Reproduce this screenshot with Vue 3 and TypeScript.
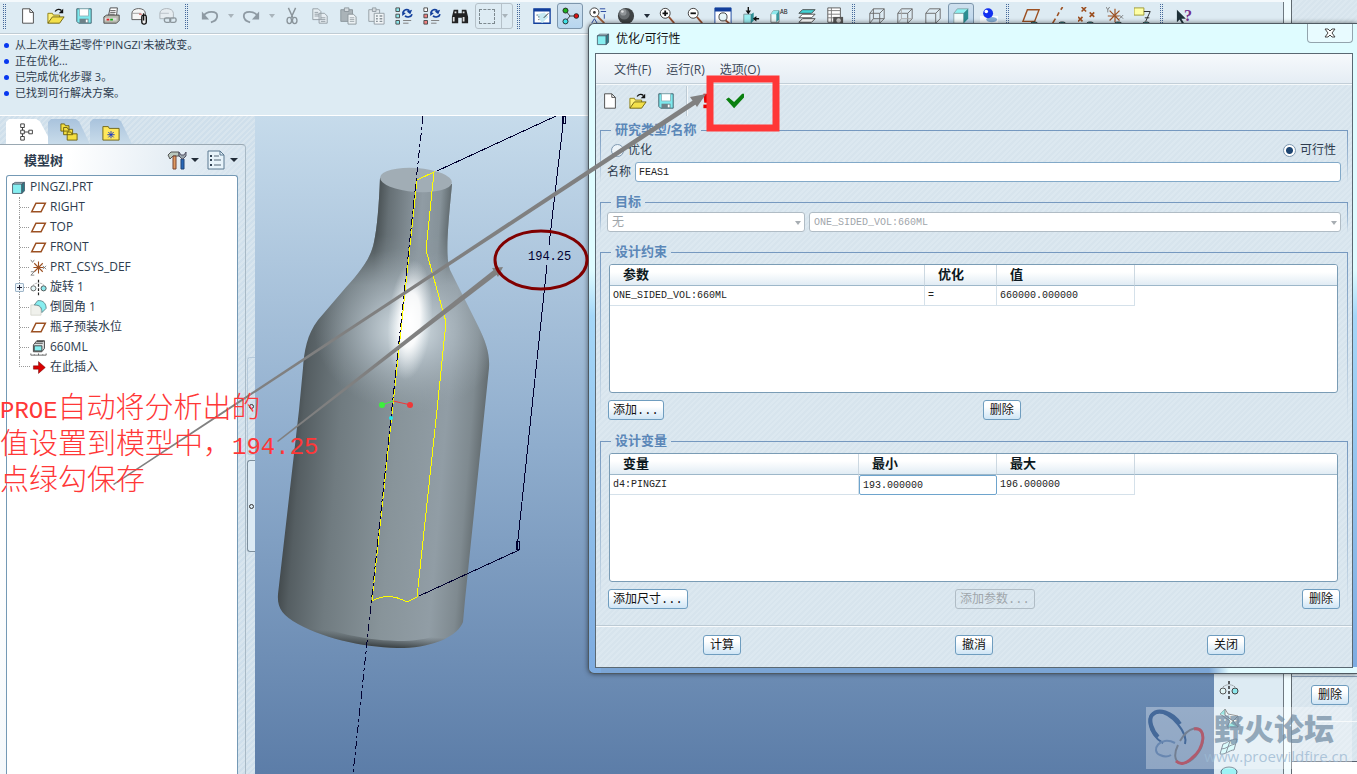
<script setup lang="ts">
import { ref } from 'vue'

interface Tool {
  kind: 'icon' | 'grip' | 'caret' | 'select'
  icon?: string
  label?: string
  active?: boolean
}
interface TreeItem {
  icon: string
  text: string
  expandable?: boolean
}

const eye = '<path d="M9 20a4 3 0 0 1 9 0z" fill="#1b8f92" stroke="#333"/>'
const cubeWire = '<path d="M2 7h11v11H2zM6 2h12v11M2 7l4-5M13 7l5-5M13 18l5-5" fill="none" stroke="#666"/>'

const icons: Record<string, string> = {
  new: '<path d="M4 2h8l4 4v12H4z" fill="#fff" stroke="#444"/><path d="M12 2v4h4" fill="none" stroke="#444"/>',
  open: '<path d="M1 18V7h5l1 2h7v3" fill="#fff27a" stroke="#8a7a10"/><path d="M1 18l5-7h13l-5 7z" fill="#f3e04a" stroke="#6b6010"/><path d="M9 5c2-3 5-3 7-1" fill="none" stroke="#111" stroke-width="1.5"/><path d="M18 2v5h-5z" fill="#111"/>',
  save: '<path d="M2 2h16v16H4l-2-2z" fill="#7de9ee" stroke="#3a5a66"/><path d="M5 2h10v8H5z" fill="#fff" stroke="#8fb6bc"/><path d="M5 13h10v5H5z" fill="#6d8188"/><path d="M12 14h2v3h-2z" fill="#fff"/>',
  print: '<path d="M6 10L8 1h8l-1 9z" fill="#fff" stroke="#444"/><path d="M8 4h6M8 6h6M7 8h6" stroke="#555"/><path d="M1 11l3-2h14v6l-3 3H1z" fill="#b9b9ae" stroke="#444"/><path d="M2 12h13v3H2z" fill="#ddd"/><path d="M4 13h3v2H4z" fill="#d22"/><path d="M8 13h3v2H8z" fill="#1a1"/>',
  mail: '<path d="M1 7c0-7 15-7 15 0v7H1z" fill="#f6f6f6" stroke="#555"/><path d="M1 7h10" stroke="#999"/><path d="M9 8h3" stroke="#c33"/><rect x="12" y="9" width="5" height="10" rx="2" fill="#eee" stroke="#111" stroke-width="1.5"/><path d="M14 7v8" stroke="#111" stroke-width="1.5"/>',
  link: '<path d="M1 7c0-7 15-7 15 0v6H1z" fill="#e6ecf0" stroke="#a8b0b6"/><path d="M1 7h10" stroke="#b8c0c6"/><rect x="6" y="12" width="7" height="5" rx="2" fill="none" stroke="#8b959b" stroke-width="1.5"/><rect x="12" y="12" width="7" height="5" rx="2" fill="none" stroke="#8b959b" stroke-width="1.5"/>',
  undo: '<path d="M3 10c3-6 15-6 15 0 0 4-3 6-7 7" fill="none" stroke="#8e9aa3" stroke-width="2"/><path d="M1 5v9h8z" fill="#8e9aa3"/>',
  redo: '<path d="M17 10c-3-6-15-6-15 0 0 4 3 6 7 7" fill="none" stroke="#8e9aa3" stroke-width="2"/><path d="M19 5v9h-8z" fill="#8e9aa3"/>',
  cut: '<path d="M6 1l5 11M14 1L9 12" stroke="#8a949a" stroke-width="1.6"/><ellipse cx="7" cy="15" rx="2.5" ry="3.5" fill="none" stroke="#8a949a" stroke-width="1.5"/><ellipse cx="13" cy="15" rx="2.5" ry="3.5" fill="none" stroke="#8a949a" stroke-width="1.5"/>',
  copy: '<path d="M2 2h6l3 3v9H2zM9 7h6l3 3v8H9z" fill="#e6edf2" stroke="#929ca3"/><path d="M4 6h4M4 8h5M4 10h5M11 12h5M11 14h5M11 16h5" stroke="#929ca3"/>',
  paste: '<path d="M2 3h13v13H2z" fill="#aab3b8" stroke="#8a949a"/><path d="M6 1h5v4H6z" fill="#d5dbdf" stroke="#8a949a"/><path d="M10 8h6l3 3v8h-9z" fill="#edf2f5" stroke="#8a949a"/><path d="M12 12h5M12 14h5M12 16h5" stroke="#9aa4aa"/>',
  pastes: '<path d="M2 3h12v13H2z" fill="#e3eaef" stroke="#929ca3"/><path d="M6 1h4v4H6z" fill="#d5dbdf" stroke="#929ca3"/><path d="M8 7h11v12H8z" fill="#f1f5f7" stroke="#929ca3"/><path d="M10 10h2M10 13h2M10 16h2M14 10h3M14 13h3M14 16h3" stroke="#8a949a" stroke-width="1.5"/>',
  regenA: '<path d="M1 1h4v4H1zM1 8h4v4H1zM1 15h4v4H1z" fill="#8de8ec" stroke="#444"/><path d="M9 6c1-3 4-4 7-2M19 8c-1 3-5 4-8 2" fill="none" stroke="#123f9c" stroke-width="1.8"/><path d="M19 3l-2 5-4-3zM8 5l4 2-4 3z" fill="#123f9c"/><path d="M9 15h9M9 18h6" stroke="#777"/>',
  regenB: '<path d="M1 1h4v4H1z" fill="#fff" stroke="#444"/><path d="M1 8h4v4H1zM1 15h4v4H1z" fill="#f08080" stroke="#444"/><path d="M9 6c1-3 4-4 7-2M19 8c-1 3-5 4-8 2" fill="none" stroke="#123f9c" stroke-width="1.8"/><path d="M19 3l-2 5-4-3zM8 5l4 2-4 3z" fill="#123f9c"/><path d="M9 15h9M9 18h6" stroke="#777"/>',
  find: '<path d="M3 3h5v4h4V3h5l2 8v7h-7v-6H8v6H1v-7z" fill="#222"/><path d="M3 11v5M14 11v5M5 5v2M14 5v2" stroke="#ddd" stroke-width="2"/>',
  repaint: '<path d="M1 2h18v16H1z" fill="#fff" stroke="#123f9c" stroke-width="1.5"/><path d="M1 2h18v3H1z" fill="#123f9c"/><path d="M4 8l9-2 4 5-7 7z" fill="#c6e9f2"/><path d="M12 12l5-5" stroke="#222"/><path d="M4 9h1M6 11h1M6 14h1" stroke="#222"/>',
  spin: '<path d="M5 4l5 6h7M10 10l-5 6" fill="none" stroke="#333"/><circle cx="5" cy="4" r="2.8" fill="#1db31d" stroke="#222"/><circle cx="17" cy="10" r="2.6" fill="#e01010" stroke="#222"/><circle cx="5" cy="16" r="2.8" fill="#3fe0e6" stroke="#222"/>',
  orient: '<circle cx="6" cy="6" r="5" fill="#fff" stroke="#333"/><circle cx="6" cy="6" r="1.5" fill="#333"/><path d="M9 10l8 8" stroke="#a0603a" stroke-width="2"/><path d="M12 2h6M13 5h6M17 8v5M3 18l3-5 3 5" stroke="#1d3f9c" fill="none"/>',
  sphere: '<circle cx="10" cy="10" r="9" fill="#3e4244"/><circle cx="8" cy="8" r="6" fill="#686d70"/><circle cx="7" cy="6" r="3.5" fill="#909598"/><circle cx="6" cy="5" r="1.5" fill="#dde0e1"/>',
  zoomin: '<circle cx="8" cy="7" r="5.5" fill="#fff" stroke="#333"/><path d="M5 7h6M8 4v6" stroke="#111" stroke-width="2"/><path d="M12 11l6 7" stroke="#944f30" stroke-width="2"/>',
  zoomout: '<circle cx="8" cy="7" r="5.5" fill="#fff" stroke="#333"/><path d="M5 7h6" stroke="#111" stroke-width="2"/><path d="M12 11l6 7" stroke="#944f30" stroke-width="2"/>',
  zoomfit: '<path d="M1 1h18v18H1z" fill="#fff" stroke="#123f9c"/><path d="M1 1h18v4H1z" fill="#123f9c"/><circle cx="10" cy="11" r="4.5" fill="#e8f8fa" stroke="#333"/><path d="M13 15l5 4" stroke="#944f30" stroke-width="2"/>',
  recent: '<path d="M2 8h8v10H2z" fill="#9aeef1" stroke="#7b9296"/><path d="M10 8l3-2v9l-3 3z" fill="#2d8e94"/><path d="M7 0v7M19 13h-5" stroke="#111" stroke-width="1.5"/><path d="M4 4h6l-3 4zM16 10v6l-4-3z" fill="#111"/>',
  views: '<path d="M1 8l3-4h6v13H1z" fill="#eefafa" stroke="#777"/><path d="M1 8l3-4h6l-3 4z" fill="#8de8ec"/><path d="M7 8l3-4v10l-3 3z" fill="#3a9aa0"/><text x="11" y="8" font-size="7" font-family="Liberation Mono" fill="#222">AB</text>',
  layers: '<path d="M1 17l4-4h14l-4 4zM1 12l4-4h14l-4 4z" fill="#fff" stroke="#444"/><path d="M1 7l4-4h14l-4 4z" fill="#43d4d6" stroke="#444"/>',
  snapshot: '<path d="M2 1h14v16H2z" fill="#fff" stroke="#555"/><path d="M2 4h14M2 8h14M2 12h14M6 1v16" stroke="#777"/><path d="M8 11h11v8H8z" fill="#555"/><circle cx="14" cy="15" r="2.5" fill="#ccc"/>',
  wire: cubeWire + '<path d="M6 2v11h12M2 18l4-5" fill="none" stroke="#666"/>',
  hidden: cubeWire + '<path d="M6 2v11h12M2 18l4-5" fill="none" stroke="#aaa"/>',
  nohidden: cubeWire,
  shaded: '<path d="M2 7h11v11H2z" fill="#f2fbfb" stroke="#8ba5a8"/><path d="M2 7l4-5h12l-5 5z" fill="#8cf1f1" stroke="#8ba5a8"/><path d="M13 7l5-5v11l-5 5z" fill="#2b8e92"/>',
  realistic: '<path d="M0 10h20v9H0z" fill="#f6fafc"/><ellipse cx="13" cy="14" rx="6" ry="3" fill="#86aed6"/><circle cx="9" cy="7" r="5.5" fill="#1230f0"/><circle cx="7" cy="5" r="2" fill="#fff"/>',
  planes: '<path d="M1 16L6 3h13l-5 13z" fill="none" stroke="#9c5022" stroke-width="1.6"/>' + eye,
  axes: '<path d="M3 18l3-5M8 10l2-4M12 3l2-3" stroke="#9c5022" stroke-width="1.8"/>' + eye,
  points: '<path d="M4 0l5 5M9 0L4 5M13 6l5 5M18 6l-5 5M0 11l5 5M5 11l-5 5" stroke="#9c5022" stroke-width="1.8"/>' + eye,
  csys: '<path d="M2 10h13M10 2v15M4 4l11 11M15 4L4 15" stroke="#9c5022" stroke-width="1.3"/><path d="M0 0l2 3 2-3M2 3v3M15 9l4 4M19 9l-4 4" fill="none" stroke="#777"/>' + eye,
  notes: '<path d="M0 1h11v8H0z" fill="#ffffa6" stroke="#99942e"/><path d="M11 5h7l-5 11" fill="none" stroke="#222"/><path d="M12 12h5" stroke="#222"/>' + eye,
  help: '<path d="M1 3v14l3-3 3 5 2-1-3-5h5z" fill="#1e3038"/><text x="9" y="15" font-size="18" font-weight="bold" font-family="Liberation Serif" fill="#75308c">?</text>',
  part: '<path d="M3 6l3-2h11l-3 2z" fill="#eefafa" stroke="#456"/><path d="M3 6h11v11H3z" fill="#86eef0" stroke="#456"/><path d="M14 6l3-2v10l-3 3z" fill="#2b7e88" stroke="#456"/>',
  plane: '<path d="M2 15L7 5h11l-5 10z" fill="none" stroke="#9c5022" stroke-width="1.8"/>',
  csysTree: '<path d="M4 10h12M10 3v14M5 5l10 10M15 5L5 15" stroke="#9c5022" stroke-width="1.3"/><path d="M1 1l2 3 2-3M15 8l4 4M19 8l-4 4M1 15h4l-4 4h4" fill="none" stroke="#777"/>',
  revolve: '<path d="M10 1v3M10 6v3M10 11v3M10 16v3" stroke="#222" stroke-width="1.4"/><circle cx="4" cy="11" r="3" fill="#e2f6f7" stroke="#555"/><circle cx="16" cy="11" r="3" fill="#8de8ec" stroke="#444"/><path d="M4 7c3-3 9-3 12 0" stroke="#777" fill="none" stroke-dasharray="1 1"/>',
  round: '<path d="M1 7h6c5 0 6 4 6 12H1z" fill="#f0f1ec" stroke="#d5d5cc"/><path d="M5 7l4-5c7-1 10 4 10 9l-5 5c0-6-2-9-9-9z" fill="#86eef0" stroke="#5b8084"/>',
  measure: '<path d="M4 7l4-5h9v9l-3 4H4z" fill="#dfe3e4" stroke="#333"/><path d="M5 8h9v6H5z" fill="#86eef0" stroke="#333"/><path d="M6 5h9M8 3h8" stroke="#333"/><path d="M1 19h18M1 17v2M5 18v1M10 17v2M15 18v1M19 17v2" stroke="#555"/>',
  insert: '<path d="M4 8h6V3l8 7-8 7v-5H4z" fill="#d80000" stroke="#500" stroke-width=".5"/>',
  hierarchy: '<path d="M3 1h4v4H3zM3 8h4v4H3zM3 15h4v4H3zM12 8h4v4h-4z" fill="#fff" stroke="#333"/><path d="M5 5v3M5 12v3M7 10h5" stroke="#333"/>',
  folders: '<path d="M1 1h4l1 2h4v6H1zM4 5h4l1 2h5v6H4zM8 10h4l1 2h6v7H8z" fill="#f4df41" stroke="#6b6010"/>',
  favorites: '<path d="M1 4h6l1 2h11v13H1z" fill="#ffe85c" stroke="#6b6010"/><path d="M10 9v8M6 13h8M7 10l6 6M13 10l-6 6" stroke="#1432c8"/>',
  hammer: '<path d="M1 5l3-3h8v4H6L3 9z" fill="#b9c7bd" stroke="#555"/><path d="M6 6h3v13H6z" fill="#e09a62" stroke="#743"/><path d="M14 9h3v10h-3z" fill="#2868b8" stroke="#247"/><path d="M12 2l2 3h3l2-3v4l-3 3h-1l-3-3z" fill="#9aa4aa" stroke="#556"/>',
  settings: '<path d="M2 1h12l4 4v14H2z" fill="#e7f3fa" stroke="#5a7890"/><path d="M14 1v4h4" fill="none" stroke="#5a7890"/><path d="M4 5h2v2H4zM4 9h2v2H4zM4 14h2v2H4z" fill="#345"/><path d="M8 6h5M8 10h7M8 15h7" stroke="#567"/>',
  run: '<path d="M6 2h6l-1 10H7z" fill="#e80000"/><path d="M6 14h6v4H6z" fill="#e80000"/>',
  check: '<path d="M0 8l3-2 6 5L18 2h2v4L9 18z" fill="#0a8010"/>',
  boundary: '<path d="M1 6l5-5 3 5 10 2v11H8l3-6z" fill="#eefafa" stroke="#666"/><path d="M1 6l5-5v6zM8 19l6-6 5 6z" fill="#6fdcd8"/><path d="M6 1v6l8 6 5-5M14 13l5 6" fill="none" stroke="#555"/>',
  surface: '<path d="M1 18L4 8c5-1 7-5 14-5l-3 11c-5 0-8 5-14 4z" fill="#c9fafb" stroke="#567"/><path d="M2 13c6 0 8-4 14-5M11 5L7 17" fill="none" stroke="#567"/>',
  fill: '<ellipse cx="10" cy="8" rx="8" ry="5" fill="#9df3f5" stroke="#567"/>',
}

const t = (icon: string, label: string, active = false): Tool => ({ kind: 'icon', icon, label, active })
const grip: Tool = { kind: 'grip' }
const caret: Tool = { kind: 'caret' }

const mainTools: Tool[] = [
  grip, t('new', '新建'), t('open', '打开'), t('save', '保存'), t('print', '打印'), t('mail', '发送'), t('link', '发送链接'),
  grip, t('undo', '撤消'), caret, t('redo', '重做'), caret, t('cut', '剪切'), t('copy', '复制'), t('paste', '粘贴'),
  t('pastes', '选择性粘贴'), t('regenA', '再生'), t('regenB', '再生管理器'), t('find', '查找'), { kind: 'select' },
  grip, t('repaint', '重画'), t('spin', '旋转中心', true), t('orient', '定向模式'), t('sphere', '外观库'), caret, t('zoomin', '放大'),
  t('zoomout', '缩小'), t('zoomfit', '重新调整'), t('recent', '重定向'), t('views', '已命名视图'), t('layers', '层'), t('snapshot', '视图管理器'),
  grip, t('wire', '线框'), t('hidden', '隐藏线'), t('nohidden', '无隐藏线'), t('shaded', '着色', true), t('realistic', '增强真实感'),
  grip, t('planes', '基准平面'), t('axes', '基准轴'), t('points', '基准点'), t('csys', '坐标系'), t('notes', '注释'),
  grip, t('help', '帮助'),
]

const messages = ["从上次再生起零件'PINGZI'未被改变。", '正在优化...', '已完成优化步骤 3。', '已找到可行解决方案。']

const tree: TreeItem[] = [
  { icon: 'plane', text: 'RIGHT' },
  { icon: 'plane', text: 'TOP' },
  { icon: 'plane', text: 'FRONT' },
  { icon: 'csysTree', text: 'PRT_CSYS_DEF' },
  { icon: 'revolve', text: '旋转 1', expandable: true },
  { icon: 'round', text: '倒圆角 1' },
  { icon: 'plane', text: '瓶子预装水位' },
  { icon: 'measure', text: '660ML' },
  { icon: 'insert', text: '在此插入' },
]

const sideTools = [
  { icon: 'revolve', label: '镜像' },
  { icon: 'boundary', label: '边界混合' },
  { icon: 'surface', label: '造型' },
  { icon: 'fill', label: '填充' },
]
const menus = ['文件(F)', '运行(R)', '选项(O)']

const study = ref('feasibility')
const studyName = ref('FEAS1')
const minimum = ref('193.000000')
</script>

<template>
  <div class="desktop">
    <main class="app">
      <header class="toolbar">
        <template v-for="(tool, i) in mainTools" :key="i">
          <span v-if="tool.kind === 'grip'" class="grip"></span>
          <span v-else-if="tool.kind === 'caret'" class="caret-cell"><i class="caret" :class="{ dim: i < 20 }"></i></span>
          <button v-else-if="tool.kind === 'select'" class="select-tool" type="button" aria-label="选取框">
            <i class="marquee"></i><i class="caret dim"></i>
          </button>
          <button v-else class="tool" :class="{ active: tool.active }" type="button" :aria-label="tool.label">
            <svg viewBox="0 0 20 20" v-html="icons[tool.icon ?? '']"></svg>
          </button>
        </template>
      </header>

      <ul class="messages">
        <li v-for="m in messages" :key="m">{{ m }}</li>
      </ul>

      <div class="work">
        <aside class="navigator">
          <div class="nav-main">
            <nav class="tabs">
              <button v-for="(name, i) in ['hierarchy', 'folders', 'favorites']" :key="name" class="tab" :class="{ on: i === 0 }" type="button" :aria-label="name">
                <svg viewBox="0 0 20 20" v-html="icons[name]"></svg>
              </button>
            </nav>
            <section class="panel">
              <div class="panel-head">
                <h2>模型树</h2>
                <button class="head-tool" type="button" aria-label="设置"><svg viewBox="0 0 20 20" v-html="icons.hammer"></svg><i class="caret"></i></button>
                <button class="head-tool" type="button" aria-label="显示"><svg viewBox="0 0 20 20" v-html="icons.settings"></svg><i class="caret"></i></button>
              </div>
              <div class="tree">
                <div class="root"><svg viewBox="0 0 20 20" v-html="icons.part"></svg>PINGZI.PRT</div>
                <ul>
                  <li v-for="item in tree" :key="item.text">
                    <span class="branch"><button v-if="item.expandable" type="button" aria-label="展开"></button></span>
                    <svg viewBox="0 0 20 20" v-html="icons[item.icon]"></svg>{{ item.text }}
                  </li>
                </ul>
              </div>
            </section>
          </div>
          <div class="sash"><span class="handle"></span><span class="handle"></span></div>
        </aside>

        <section class="viewport">
          <svg class="model" width="345" height="658" viewBox="255 116 345 658">
            <defs>
              <linearGradient id="body" gradientUnits="userSpaceOnUse" x1="290" y1="440" x2="482" y2="456">
                <stop offset="0" stop-color="#42494c" /><stop offset=".06" stop-color="#555e62" /><stop offset=".25" stop-color="#707b80" />
                <stop offset=".55" stop-color="#88949a" /><stop offset=".8" stop-color="#919da5" /><stop offset=".93" stop-color="#7f8a90" /><stop offset="1" stop-color="#636c70" />
              </linearGradient>
              <linearGradient id="neck" gradientUnits="userSpaceOnUse" x1="377" y1="220" x2="450" y2="225">
                <stop offset="0" stop-color="#4b5356" /><stop offset=".15" stop-color="#667075" /><stop offset=".6" stop-color="#909ca4" /><stop offset=".85" stop-color="#869299" /><stop offset="1" stop-color="#5e686c" />
              </linearGradient>
              <linearGradient id="neckFade" gradientUnits="userSpaceOnUse" x1="0" y1="235" x2="0" y2="285">
                <stop offset="0" stop-color="#fff" /><stop offset="1" stop-color="#000" />
              </linearGradient>
              <mask id="neckMask"><rect x="255" y="116" width="345" height="658" fill="url(#neckFade)" /></mask>
              <radialGradient id="sheen" gradientUnits="userSpaceOnUse" cx="0" cy="0" r="1" gradientTransform="translate(408 330) rotate(4) scale(94 82)">
                <stop offset="0" stop-color="#dfe9ee" /><stop offset=".4" stop-color="#b4c0c8" stop-opacity=".8" /><stop offset="1" stop-color="#98a4ac" stop-opacity="0" />
              </radialGradient>
              <radialGradient id="glow" gradientUnits="userSpaceOnUse" cx="0" cy="0" r="1" gradientTransform="translate(410 320) rotate(5) scale(22 60)">
                <stop offset="0" stop-color="#fff" /><stop offset=".45" stop-color="#fff" stop-opacity=".9" /><stop offset="1" stop-color="#e6eef2" stop-opacity="0" />
              </radialGradient>
              <linearGradient id="foot" gradientUnits="userSpaceOnUse" x1="372" y1="618" x2="370" y2="648">
                <stop offset=".5" stop-color="#3d4447" stop-opacity="0" /><stop offset="1" stop-color="#2d3335" />
              </linearGradient>
              <clipPath id="bottleClip">
                <path id="bottle" d="M380 178C379 205 377 228 374 242C370 262 356 276 342 292L318 320C307 334 304 352 303 368L299 410L278 594C277 608 282 615 298 624C328 640 368 648 404 648C434 647 458 636 463 622L465 600L489 368C490 354 486 342 478 326L450 270C445 256 448 226 452 184Z" />
              </clipPath>
            </defs>
            <g clip-path="url(#bottleClip)">
              <rect x="255" y="116" width="345" height="658" fill="url(#body)" />
              <rect x="340" y="160" width="140" height="150" fill="url(#neck)" mask="url(#neckMask)" />
              <rect x="300" y="230" width="190" height="200" fill="url(#sheen)" />
              <rect x="370" y="240" width="90" height="150" fill="url(#glow)" />
              <path d="M278 596C279 606 284 610 298 616C328 633 368 641 404 641C434 640 456 630 464 616V660H270Z" fill="url(#foot)" />
            </g>
            <ellipse cx="416" cy="180" rx="36" ry="12" transform="rotate(4 416 180)" fill="#a1adb5" />
            <g fill="none" shape-rendering="crispEdges">
              <path d="M417 180L434 172L426 250L446 322L437 410L417 597L407 602C396 596 384 594 372 601L417 180" stroke="#ff0" />
              <path d="M423 116L353 774" stroke="#000030" stroke-dasharray="8 3 3 3" />
              <path d="M437 171L556 116M564 116L549 245M547 265L517 549M419 596L519 550" stroke="#000030" />
              <path d="M562 116h3v7h-3zM516 541h3v8h-3z" stroke="#000030" />
            </g>
            <path d="M393 401L382 405" stroke="#3cf03c" /><path d="M393 401L411 405" stroke="#f03838" />
            <circle cx="382" cy="405" r="3" fill="#3cf03c" /><circle cx="410" cy="405" r="3" fill="#f03838" /><circle cx="391" cy="418" r="2" fill="#20e8f0" />
            <text x="528" y="260" class="dimension">194.25</text>
          </svg>
        </section>

        <aside class="side-tools">
          <button v-for="s in sideTools" :key="s.icon" class="tool" type="button" :aria-label="s.label">
            <svg viewBox="0 0 20 20" v-html="icons[s.icon]"></svg>
          </button>
        </aside>
      </div>
    </main>

    <aside class="back-window">
      <div class="back-body hatch">
        <div class="back-row"><button class="btn" type="button">删除</button></div>
      </div>
    </aside>

    <section class="dialog" role="dialog" aria-labelledby="dialog-title">
      <header class="titlebar">
        <svg viewBox="0 0 20 20" v-html="icons.part"></svg>
        <h1 id="dialog-title">优化/可行性</h1>
        <button class="close" type="button" aria-label="关闭窗口">
          <svg viewBox="0 0 12 10"><path d="M1 1h3l2 2 2-2h3L8 5l3 4H8L6 7 4 9H1l3-4z" fill="#fff" stroke="#444" /></svg>
        </button>
      </header>
      <div class="client hatch">
        <nav class="menu"><button v-for="m in menus" :key="m" type="button">{{ m }}</button></nav>
        <div class="dialog-tools">
          <button class="tool" type="button" aria-label="新建"><svg viewBox="0 0 20 20" v-html="icons.new"></svg></button>
          <button class="tool" type="button" aria-label="打开"><svg viewBox="0 0 20 20" v-html="icons.open"></svg></button>
          <button class="tool" type="button" aria-label="保存"><svg viewBox="0 0 20 20" v-html="icons.save"></svg></button>
          <span class="divider"></span>
          <button class="tool" type="button" aria-label="运行"><svg viewBox="0 0 20 20" v-html="icons.run"></svg></button>
          <button class="tool" type="button" aria-label="确认"><svg viewBox="0 0 20 20" v-html="icons.check"></svg></button>
        </div>

        <form class="groups" @submit.prevent>
          <fieldset>
            <legend>研究类型/名称</legend>
            <div class="radios">
              <label><input v-model="study" type="radio" name="study" value="optimize" />优化</label>
              <label><input v-model="study" type="radio" name="study" value="feasibility" />可行性</label>
            </div>
            <div class="name-row">
              <label for="study-name">名称</label>
              <input id="study-name" v-model="studyName" type="text" />
            </div>
          </fieldset>

          <fieldset>
            <legend>目标</legend>
            <div class="selects">
              <span class="combo goal"><select disabled aria-label="目标类型"><option>无</option></select></span>
              <span class="combo"><select disabled aria-label="目标参数" class="mono"><option>ONE_SIDED_VOL:660ML</option></select></span>
            </div>
          </fieldset>

          <fieldset class="table-group">
            <legend>设计约束</legend>
            <div class="grid">
              <table>
                <colgroup><col class="w-name" /><col class="w-op" /><col class="w-val" /><col /></colgroup>
                <thead><tr><th>参数</th><th>优化</th><th>值</th><th class="blank"></th></tr></thead>
                <tbody><tr><td>ONE_SIDED_VOL:660ML</td><td>=</td><td>660000.000000</td><td class="blank"></td></tr></tbody>
              </table>
            </div>
            <div class="actions">
              <button class="btn" type="button">添加...</button>
              <button class="btn middle" type="button">删除</button>
            </div>
          </fieldset>

          <fieldset class="table-group">
            <legend>设计变量</legend>
            <div class="grid">
              <table>
                <colgroup><col class="w-var" /><col class="w-val" /><col class="w-val" /><col /></colgroup>
                <thead><tr><th>变量</th><th>最小</th><th>最大</th><th class="blank"></th></tr></thead>
                <tbody><tr><td>d4:PINGZI</td><td class="edit"><input v-model="minimum" type="text" aria-label="最小" /></td><td>196.000000</td><td class="blank"></td></tr></tbody>
              </table>
            </div>
            <div class="actions">
              <button class="btn" type="button">添加尺寸...</button>
              <button class="btn" type="button" disabled>添加参数...</button>
              <button class="btn" type="button">删除</button>
            </div>
          </fieldset>
        </form>

        <footer class="footer">
          <button class="btn" type="button">计算</button>
          <button class="btn" type="button">撤消</button>
          <button class="btn" type="button">关闭</button>
        </footer>
      </div>
    </section>

    <div class="watermark">
      <svg viewBox="0 0 60 60" fill="none">
        <path d="M39 37C42 26 26 6 12 5C-2 5 2 28 17 36" stroke="#31598f" stroke-width="2" />
        <path d="M34 17C26 5 12 1 6 8C2 13 6 24 12 30" stroke="#31598f" stroke-width="4" />
        <path d="M34 34C42 20 56 16 57 30C58 44 44 58 34 56C28 54 28 46 32 38" stroke="#6c7686" stroke-width="2" />
        <path d="M48 22C62 20 58 42 46 51C40 57 34 58 30 54" stroke="#b84858" stroke-width="3" />
        <path d="M29 36C14 28 4 44 14 48C18 50 22 50 25 48" stroke="#5e7fac" stroke-width="2" />
      </svg>
      <div class="mark-text"><strong>野火论坛</strong><span>www.proewildfire.cn</span></div>
    </div>

    <svg class="marks" width="800" height="520" viewBox="0 0 800 520">
      <path d="M113 484L698 97L701 101L114 485Z" fill="#808080" /><path d="M706 94L690 97L697 107Z" fill="#808080" />
      <path d="M277 441L495 269L499 273L278 442Z" fill="#808080" /><path d="M503 267L492 268L498 277Z" fill="#808080" />
      <ellipse cx="541" cy="260" rx="46" ry="29" fill="none" stroke="#800000" stroke-width="3" />
      <path d="M710 79H776V128H710Z" fill="none" stroke="#ff3737" stroke-width="7" />
    </svg>
    <p class="note">
      <span><b>PROE</b>自动将分析出的</span>
      <span>值设置到模型中，<b>194.25</b></span>
      <span>点绿勾保存</span>
    </p>
  </div>
</template>

<style>
body { margin: 0; overflow: hidden; }
</style>

<style scoped>
.desktop {
  position: relative; display: flex; height: 100vh; overflow: hidden; background: #fff;
  font: 12px/16px "Open Sans", "Noto Sans CJK SC", sans-serif; color: #2e3c4e;
}
* { box-sizing: border-box; }
button, input, select { font: inherit; color: inherit; }
button { padding: 0; border: 0; background: none; }
ul { list-style: none; margin: 0; padding: 0; }
h1, h2 { margin: 0; font-size: 12px; font-weight: 400; }
svg { display: block; flex: none; }
.hatch { background: repeating-linear-gradient(135deg, #d7e4ed 0 2px, #dce8f0 2px 4px); }

.app { flex: 1; min-width: 0; display: flex; flex-direction: column; border-right: 7px solid #f0fcff; background: #ddebf3; box-shadow: inset -1px 0 #6d7880; }
.toolbar { flex: none; display: flex; align-items: center; height: 34px; padding-bottom: 3px; border-top: 2px solid #f4f9fc; border-bottom: 1px solid #c0ccd4; overflow: hidden; }
.grip { flex: none; width: 14px; height: 27px; padding-left: 3px; }
.grip::before { content: ""; display: block; width: 4px; height: 27px; background: linear-gradient(#ddebf3 1px, transparent 1px) 0 0 / 100% 2px, repeating-linear-gradient(90deg, #46699b 0 1px, #ddebf3 1px 2px); }
.caret-cell { flex: none; width: 13px; display: flex; justify-content: center; }
.caret { flex: none; width: 0; height: 0; border: 3px solid transparent; border-top: 4px solid #222c38; border-bottom: 0; }
.caret.dim { border-top-color: #a9b4bb; }
.tool { flex: none; width: 28px; height: 28px; display: grid; place-items: center; border-radius: 3px; }
.tool svg { width: 18px; height: 18px; }
.tool.active { width: 26px; height: 26px; margin: 0 1px; border: 1px solid #7d96ac; background: linear-gradient(#cfe0ee, #b7d6ef); }
.select-tool { flex: none; width: 38px; height: 26px; margin: 0 1px; display: flex; align-items: center; gap: 7px; padding: 0 4px 0 3px; border: 1px solid #b5c1c9; border-radius: 3px; background: linear-gradient(90deg, transparent 25px, #b5c1c9 25px 26px, transparent 26px); }
.marquee { width: 19px; height: 15px; border: 1px dashed #7d898f; }

.messages { flex: none; height: 82px; padding: 2px 4px; border-top: 1px solid #fff; border-bottom: 1px solid #fff; font-size: 11px; }
.messages li { display: flex; align-items: center; gap: 6px; }
.messages li::before { content: ""; width: 5px; height: 5px; border-radius: 50%; background: #0838f0; }

.work { flex: 1; min-height: 0; display: flex; }
.navigator { flex: none; width: 255px; display: flex; background: repeating-linear-gradient(135deg, #cfdfeb 0 2px, #d8e5ee 2px 4px); }
.nav-main { flex: 1; display: flex; flex-direction: column; }
.tabs { display: flex; height: 28px; padding: 3px 0 0 6px; }
.tab { width: 42px; height: 25px; padding-left: 12px; background: linear-gradient(#a9c3dd, #c9dcea); clip-path: polygon(0 3px, 3px 0, 66% 0, 74% 10%, 100% 100%, 0 100%); }
.tab.on { width: 46px; margin-right: -4px; background: #fff; position: relative; }
.tab svg { width: 18px; height: 18px; }
.panel { flex: 1; display: flex; flex-direction: column; padding: 0 7px 0 6px; border-top: 1px solid #9aa8b2; border-right: 1px solid #a8b9c5; border-top-right-radius: 4px; background: linear-gradient(100deg, #fff 20%, #e4edf4 50%, transparent 75%); }
.panel-head { display: flex; align-items: center; height: 30px; gap: 7px; }
.panel-head h2 { flex: 1; padding-left: 18px; font-size: 13px; font-weight: 700; }
.head-tool { display: flex; align-items: center; gap: 4px; }
.head-tool svg { width: 20px; height: 20px; }
.head-tool .caret { border-width: 4px 4px 0; }
.tree { flex: 1; padding-top: 1px; border: 1px solid #7499b5; border-bottom: 0; border-radius: 3px 3px 0 0; background: #fff; }
.tree svg { width: 17px; height: 17px; margin-right: 3px; }
.root { display: flex; align-items: center; height: 20px; padding-left: 3px; }
.tree ul { margin-left: 12px; }
.tree li { display: flex; align-items: center; height: 20px; }
.branch { position: relative; align-self: stretch; width: 11px; border-left: 1px dotted #999; background: repeating-linear-gradient(90deg, #999 0 1px, transparent 1px 2px) 0 10px / 100% 1px no-repeat; }
.tree li:last-child .branch { height: 10px; align-self: flex-start; border-bottom: 1px dotted #999; background: none; }
.branch button { position: absolute; left: -5px; top: 6px; width: 9px; height: 9px; border: 1px solid #9fb6c9; border-radius: 1px; background: linear-gradient(#223, #223) center / 5px 1px no-repeat, linear-gradient(#223, #223) center / 1px 5px no-repeat, #eef5fa; }
.sash { flex: none; width: 9px; display: flex; flex-direction: column; align-items: flex-end; padding-top: 241px; gap: 5px; }
.handle { width: 8px; height: 98px; display: grid; place-items: center; border: 1px solid #b6cadb; border-right: 0; border-radius: 3px 0 0 3px; }
.handle:last-child { height: 92px; border-color: #7d8f9d; background: #dceaf4; }
.handle::after { content: ""; width: 3px; height: 3px; border: 1px solid #333; border-radius: 50%; }
.viewport { flex: 1; min-width: 0; overflow: hidden; background: linear-gradient(#c6dbeb, #8fadcd 50%, #5c7da8); }
.dimension { font: 12px "Liberation Mono", monospace; fill: #000030; }
.side-tools { flex: none; width: 70px; display: flex; flex-direction: column; justify-content: flex-end; padding-left: 1px; margin-bottom: -14px; }
.side-tools .tool svg { width: 20px; height: 20px; }

.back-window { flex: none; width: 66px; display: flex; flex-direction: column; padding-bottom: 12px; border-left: 1px solid #606970; background: #fff; }
.back-body { flex: 1; display: flex; flex-direction: column; justify-content: flex-end; border-bottom: 1px solid #586270; background-color: #d8e5ee; }
.back-row { display: flex; justify-content: flex-end; align-items: flex-end; padding: 8px 8px 16px; border-top: 1px solid #8aa0b8; margin-bottom: 39px; border-bottom: 1px solid #f4f8fa; }

.dialog { position: absolute; left: 588px; right: 0; top: 23px; padding: 0 4px 5px 6px; border: 1px solid #4f5a62; border-right: 0; border-radius: 6px 0 0 6px; background: linear-gradient(90deg, transparent 12px, #7ba5d5 12px 620px, #e1fbff 640px) bottom / 100% 6px no-repeat, linear-gradient(#dffcff 0, #dffcff 38%, #a5d7f8 45%, #7dabe0); box-shadow: 0 0 5px #0008; }
.titlebar { display: flex; align-items: center; height: 29px; color: #111; }
.titlebar > svg { width: 16px; height: 16px; margin-right: 5px; }
.titlebar h1 { flex: 1; }
.close { align-self: flex-start; width: 46px; height: 19px; display: grid; place-items: center; border: 1px solid #93a4ad; border-top: 0; border-radius: 0 0 4px 4px; background: #e8fbff; }
.close svg { width: 12px; height: 10px; }
.client { border: 1px solid #5a6872; }
.menu { display: flex; gap: 15px; height: 30px; padding: 2px 0 0 18px; border-bottom: 1px solid #c3cfd8; background: linear-gradient(#f6f9fc, #e5edf4); color: #3c4859; }
.dialog-tools { display: flex; align-items: center; height: 38px; padding: 0 0 5px; border-top: 1px solid #f5f9fb; }
.dialog-tools .divider { width: 1px; height: 30px; margin: 0 5px 0 6px; background: #f4f8fa; border-left: 1px solid #bdcbd5; box-sizing: content-box; }
.groups { padding: 0 4px; }
fieldset { min-width: 0; margin: 0 0 12px; padding: 2px 6px 0; border: 1px solid; border-bottom: 0; border-image: linear-gradient(#7598bf, #a7bfd6 60%, transparent) 1; }
legend { margin-left: 4px; padding: 0 4px; font: 700 13px/16px "Liberation Sans", "Noto Sans CJK SC", sans-serif; color: #5b87b8; }
.radios { display: flex; justify-content: space-between; height: 20px; padding: 0 5px 0 4px; }
.radios label { display: flex; align-items: center; gap: 4px; }
.radios input { appearance: none; width: 13px; height: 13px; margin: 0; border: 1px solid #7f99b1; border-radius: 50%; background: #edf4f9; }
.radios input:checked { background: radial-gradient(circle, #1e4672 3px, #fff 4px); }
.name-row { display: flex; align-items: center; gap: 4px; padding-top: 2px; }
.name-row input { flex: 1; height: 20px; padding: 0 3px; border: 1px solid #82a9c8; border-radius: 3px; background: #fff; font: 10px "Liberation Mono", monospace; color: #222; outline: 0; }
.selects { display: flex; gap: 4px; }
.combo { position: relative; flex: 1; }
.combo.goal { flex: 0 0 198px; }
.combo::after { content: ""; position: absolute; right: 4px; top: 9px; border: 3px solid transparent; border-top: 4px solid #a7adb2; border-bottom: 0; }
.combo select { appearance: none; display: block; width: 100%; height: 20px; padding: 0 4px; border: 1px solid #b0bcc5; border-radius: 3px; background: #fff; color: #9fa6ab; opacity: 1; }
.combo select.mono { font: 10px "Liberation Mono", monospace; }
.table-group { margin-bottom: 13px; padding: 4px 9px 0 8px; }
.table-group legend { margin-left: 2px; }
.grid { height: 129px; overflow: hidden; border: 1px solid #7a9cb5; border-radius: 3px; background: #fff; }
table { width: 100%; table-layout: fixed; border-collapse: separate; border-spacing: 0; }
.w-name { width: 315px; }
.w-op { width: 72px; }
.w-var { width: 249px; }
.w-val { width: 138px; }
th { height: 21px; padding: 0 0 0 13px; border-right: 1px solid #ccd8e1; border-bottom: 1px solid #9db7c9; background: linear-gradient(#fff 35%, #e1ecf4); text-align: left; font: 700 13px/16px "Liberation Sans", "Noto Sans CJK SC", sans-serif; color: #0c1820; }
td { height: 20px; padding: 0 3px; border-right: 1px solid #d5e1ea; border-bottom: 1px solid #d5e1ea; font: 10px/16px "Liberation Mono", monospace; color: #222; }
th.blank { border-right: 0; }
td.blank { border: 0; }
td.edit { padding: 0; border: 0; }
td.edit input { display: block; width: 100%; height: 20px; padding: 0 3px; border: 1px solid #6ea4cd; border-radius: 2px; background: #fff; outline: 0; }
.actions { display: flex; justify-content: space-between; padding-top: 7px; margin: 0 -2px 0 -1px; }
.actions .middle { margin: 0 auto; }
.btn { height: 20px; min-width: 38px; padding: 1px 4px 0; border: 1px solid #6f9dbf; border-radius: 3px; background: linear-gradient(#fff 30%, #cfe5f5); font: 12px/16px "Liberation Mono", "Noto Sans CJK SC", monospace; color: #111; white-space: nowrap; }
.btn:disabled { border-color: #b0bcc5; background: transparent; color: #9fa6ab; }
.footer { display: flex; justify-content: space-around; padding: 8px 0 12px; margin-top: 17px; border-top: 1px solid #f7fafc; box-shadow: 0 -1px #bccad4; }

.watermark { position: absolute; right: 5px; bottom: 5px; display: flex; width: 206px; height: 62px; background: #ffffff50; }
.watermark svg { width: 60px; height: 60px; opacity: .8; }
.mark-text { flex: 1; display: flex; flex-direction: column; align-items: flex-end; margin-left: -6px; padding-right: 4px; white-space: nowrap; }
.mark-text strong { padding-right: 14px; font: 900 30px/40px "Noto Sans CJK SC", sans-serif; color: #6c879fb0; }
.mark-text span { font: 15px/18px "Open Sans", sans-serif; color: #9db9d2cc; }

.marks { position: absolute; left: 0; top: 0; pointer-events: none; }
.note { position: absolute; left: 0; top: 387px; margin: 0; pointer-events: none; font: 300 29px/36px "Noto Sans CJK SC", sans-serif; color: #ff3737; }
.note span { display: block; height: 36px; white-space: nowrap; }
.note b { font: 400 24px/36px "Liberation Mono", monospace; }
</style>
